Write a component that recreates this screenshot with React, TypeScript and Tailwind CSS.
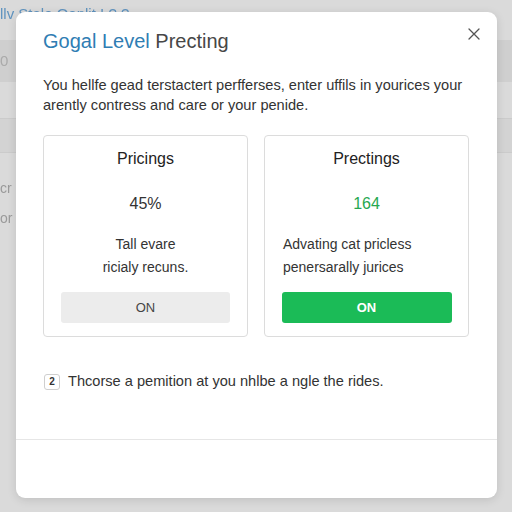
import React from "react";

export default function App() {
  return (
    <div className="relative w-[512px] h-[512px] overflow-hidden bg-[#dadada]" style={{ fontFamily: '"Liberation Sans", Arial, sans-serif' }}>
      {/* background page */}
      <div className="flex flex-col">
        <div className="h-[40px] flex items-start pt-[3px] text-[#5f93bf] text-[15px] blur-[0.6px]">
          <span>llv  Stale  Oonlit  ! ? ?</span>
        </div>
        <div className="h-[42px] bg-[#cfcfcf] flex items-center text-[#aaa] text-[15px] blur-[0.5px]">0</div>
        <div className="h-[36px]"></div>
        <div className="h-[35px] bg-[#d3d3d3] border-t border-b border-[#cbcbcb]"></div>
        <div className="flex flex-col pt-[25px] text-[#9a9a9a] text-[14px] gap-[9px] blur-[0.3px]">
          <span>cr</span>
          <span>or</span>
        </div>
      </div>

      {/* modal */}
      <div className="absolute left-[16px] top-[12px] w-[481px] h-[486px] bg-white rounded-[9px] shadow-[0_2px_10px_rgba(0,0,0,0.12)] flex flex-col">
        <div className="flex items-start justify-between pl-[27px] pr-[17px] pt-[16px]">
          <h1 className="text-[20px] leading-[26px] font-normal">
            <span className="text-[#2f7db3]">Gogal Level</span>{" "}
            <span className="text-[#474747]">Precting</span>
          </h1>
          <svg width="12" height="12" viewBox="0 0 12 12" className="mt-[0px]">
            <path d="M1 1 L11 11 M11 1 L1 11" stroke="#555" strokeWidth="1.3" strokeLinecap="round" />
          </svg>
        </div>
        <p className="px-[27px] mt-[22px] text-[14.6px] leading-[19.5px] text-[#333]">
          You hellfe gead terstactert perfferses, enter uffils in yourices your arently contress and care or your penide.
        </p>
        <div className="flex gap-[16px] pl-[27px] mt-[20px]">
          <div className="w-[205px] h-[202px] border border-[#dcdcdc] rounded-[4px] flex flex-col items-center pt-[13px]">
            <div className="text-[16px] leading-[20px] text-[#222]">Pricings</div>
            <div className="text-[16px] leading-[20px] text-[#333] mt-[25px]">45%</div>
            <div className="text-[14px] leading-[23px] text-[#333] mt-[19px] text-center">
              <div>Tall evare</div>
              <div>ricialy recuns.</div>
            </div>
            <div className="mt-[13px] w-[169px] h-[31px] bg-[#ececec] rounded-[3px] flex items-center justify-center text-[13px] text-[#444]">ON</div>
          </div>
          <div className="w-[205px] h-[202px] border border-[#dcdcdc] rounded-[4px] flex flex-col items-center pt-[13px]">
            <div className="text-[16px] leading-[20px] text-[#222]">Prectings</div>
            <div className="text-[16px] leading-[20px] text-[#26a84f] mt-[25px]">164</div>
            <div className="self-stretch pl-[18px] text-[14px] leading-[23px] text-[#333] mt-[19px]">
              <div>Advating cat pricless</div>
              <div>penersarally jurices</div>
            </div>
            <div className="mt-[13px] w-[170px] h-[31px] bg-[#1bbb57] rounded-[3px] flex items-center justify-center text-[13px] font-bold text-white">ON</div>
          </div>
        </div>
        <div className="flex items-center gap-[8px] pl-[28px] mt-[34px]">
          <div className="w-[16px] h-[16px] border border-[#cfcfcf] rounded-[3px] flex items-center justify-center text-[10px] font-bold leading-none text-[#333]">2</div>
          <span className="text-[14.6px] text-[#333]">Thcorse a pemition at you nhlbe a ngle the rides.</span>
        </div>
        <div className="mt-auto h-[59px] border-t border-[#e6e6e6]"></div>
      </div>
    </div>
  );
}
